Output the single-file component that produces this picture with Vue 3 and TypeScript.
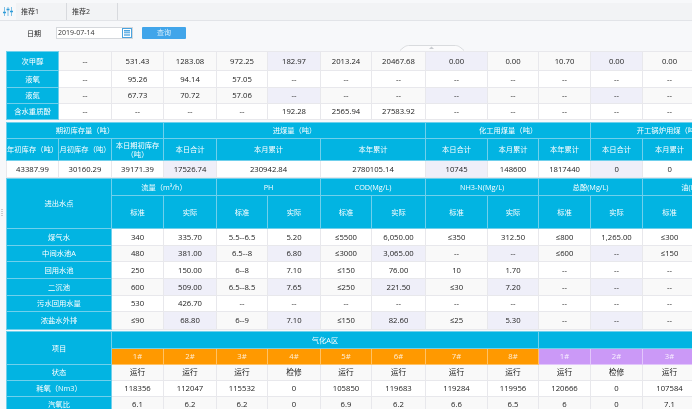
<script setup lang="ts">
type Cell = { t: string; span?: number; rows?: number; cls?: string }
type Row = { h: string; cls?: string; cells: Cell[] }

const colWidths = [52, 53, 52, 53, 51, 53, 51, 54, 62, 51, 52, 52, 54, 52, 52, 52, 52, 52, 52]

const head = (t: string, span = 1, rows = 1, cls = 'hd'): Cell => ({ t, span, rows, cls })

// columns that carry the pale lilac tint, given as index in the row
const body = (vals: string[], shaded: number[] = [], cls = ''): Cell[] =>
  vals.map((t, i) => ({ t, cls: [shaded.includes(i) ? 'tint' : '', cls].join(' ') }))

const dash = '--'

const stockRows: Row[] = [
  { h: 'h19', cls: 'stripe', cells: [head('次甲醇'), ...body([dash, '531.43', '1283.08', '972.25', '182.97', '2013.24', '20467.68', '0.00', '0.00', '10.70', '0.00', '0.00'], [4, 7, 10])] },
  { h: 'h17', cells: [head('液氧'), ...body([dash, '95.26', '94.14', '57.05', dash, dash, dash, dash, dash, dash, dash, dash])] },
  { h: 'h16', cls: 'stripe', cells: [head('液氮'), ...body([dash, '67.73', '70.72', '57.06', dash, dash, dash, dash, dash, dash, dash, dash], [4, 7, 10])] },
  { h: 'h16', cells: [head('含水重质酚'), ...body([dash, dash, dash, dash, '192.28', '2565.94', '27583.92', dash, dash, dash, dash, dash])] },
]

const coalRows: Row[] = [
  { h: 'h16', cells: [head('期初库存量（吨）', 3), head('进煤量（吨）', 5), head('化工用煤量（吨）', 3), head('开工锅炉用煤（吨）', 3)] },
  {
    h: 'h22',
    cells: [
      head('年初库存（吨）'), head('月初库存（吨）'), head('本日期初库存（吨）'),
      head('本日合计'), head('本月累计', 2), head('本年累计', 2),
      head('本日合计'), head('本月累计'), head('本年累计'),
      head('本日合计'), head('本月累计'), head('本年累计'),
    ],
  },
  {
    h: 'h17',
    cells: [
      ...body(['43387.99', '30160.29', '39171.39', '17526.74'], [3]),
      { t: '230942.84', span: 2 },
      { t: '2780105.14', span: 2 },
      ...body(['10745', '148600', '1817440', '0', '0', '0'], [0, 3]),
    ],
  },
]

const pair = () => [head('标准'), head('实际')]

const waterRows: Row[] = [
  {
    h: 'h17',
    cells: [
      head('进出水点', 2, 2), head('流量（m³/h）', 2), head('PH', 2), head('COD(Mg/L)', 2),
      head('NH3-N(Mg/L)', 2), head('总酚(Mg/L)', 2), head('油(Mg/L)', 2),
    ],
  },
  { h: 'h33', cells: [...pair(), ...pair(), ...pair(), ...pair(), ...pair(), ...pair()] },
  { h: 'h17', cells: [head('煤气水', 2), ...body(['340', '335.70', '5.5--6.5', '5.20', '≤5500', '6,050.00', '≤350', '312.50', '≤800', '1,265.00', '≤300'])] },
  { h: 'h16', cls: 'stripe', cells: [head('中间水池A', 2), ...body(['480', '381.00', '6.5--8', '6.80', '≤3000', '3,065.00', dash, dash, '≤600', dash, '≤150'], [1, 3, 5, 7, 9])] },
  { h: 'h17', cells: [head('回用水池', 2), ...body(['250', '150.00', '6--8', '7.10', '≤150', '76.00', '10', '1.70', dash, dash, dash])] },
  { h: 'h17', cls: 'stripe', cells: [head('二沉池', 2), ...body(['600', '509.00', '6.5--8.5', '7.65', '≤250', '221.50', '≤30', '7.20', dash, dash, dash], [1, 3, 5, 7, 9])] },
  { h: 'h16', cells: [head('污水回用水量', 2), ...body(['530', '426.70', dash, dash, dash, dash, dash, dash, dash, dash, dash])] },
  { h: 'h18', cls: 'stripe', cells: [head('浓盐水外排', 2), ...body(['≤90', '68.80', '6--9', '7.10', '≤150', '82.60', '≤25', '5.30', dash, dash, dash], [1, 3, 5, 7, 9])] },
]

const unitRows: Row[] = [
  { h: 'h17', cells: [head('项目', 2, 2), head('气化A区', 8), head('气化B区', 8)] },
  {
    h: 'h16',
    cells: [
      ...['1#', '2#', '3#', '4#', '5#', '6#', '7#', '8#'].map((t) => head(t, 1, 1, 'orange')),
      ...['1#', '2#', '3#'].map((t) => head(t, 1, 1, 'purple')),
    ],
  },
  { h: 'h16', cls: 'stripe', cells: [head('状态', 2), ...body(['运行', '运行', '运行', '检修', '运行', '运行', '运行', '运行', '运行', '检修', '运行'])] },
  { h: 'h16', cells: [head('耗氧（Nm3）', 2), ...body(['118356', '112047', '115532', '0', '105850', '119683', '119284', '119956', '120666', '0', '107584'])] },
  { h: 'h16', cls: 'stripe', cells: [head('汽氧比', 2), ...body(['6.1', '6.2', '6.2', '0', '6.9', '6.2', '6.6', '6.5', '6', '0', '7.1'])] },
]

const sections = [
  { name: 'sec-stock', rows: stockRows },
  { name: 'sec-coal', rows: coalRows },
  { name: 'sec-water', rows: waterRows },
  { name: 'sec-unit', rows: unitRows },
]
</script>

<template>
  <div class="page">
    <div class="tabs">
      <div class="tab-icon">
        <svg width="10" height="9" viewBox="0 0 10 9">
          <path d="M1.5 0v9M5 0v9M8.500 0v9" stroke="#7fc0e6" stroke-width="1" fill="none" />
          <path d="M0 5.500h3M3.500 2.500h3M7 4.500h3" stroke="#2f9bd8" stroke-width="1.400" fill="none" />
        </svg>
      </div>
      <div class="tab">推荐1</div>
      <div class="tab">推荐2</div>
    </div>

    <div class="filter">
      <label class="filter-label">日期</label>
      <div class="date-box">
        <span class="date-text">2019-07-14</span>
        <span class="date-btn">
          <svg width="8" height="8" viewBox="0 0 8 8">
            <rect x="0.500" y="0.500" width="7" height="7" fill="none" stroke="#fff" />
            <path d="M1 2.800h6M1 4.500h6M1 6h6" stroke="#fff" stroke-width="0.700" />
          </svg>
        </span>
      </div>
      <button class="query-btn">查询</button>
    </div>

    <div class="collapse-handle">
      <svg width="64" height="6" viewBox="0 0 64 6">
        <path d="M0 5.500C5 1 6 .5 10 .5h44c4 0 5 .5 10 5" fill="#fbfbfc" stroke="#d9dbde" />
        <path d="M29 4l2.500-2.500L34 4z" fill="#c9ccd0" />
      </svg>
    </div>
    <div class="side-handle"></div>

    <div class="tables">
      <table v-for="sec in sections" :key="sec.name" :class="sec.name">
        <colgroup>
          <col v-for="(w, i) in colWidths" :key="i" :width="w" />
        </colgroup>
        <tbody>
          <tr v-for="(row, r) in sec.rows" :key="r" :class="[row.h, row.cls]">
            <td
              v-for="(cell, c) in row.cells"
              :key="c"
              :colspan="cell.span || 1"
              :rowspan="cell.rows || 1"
              :class="cell.cls"
            >{{ cell.t }}</td>
          </tr>
        </tbody>
      </table>
    </div>
  </div>
</template>

<style>
html,
body {
  margin: 0;
  background: #f7f8fa;
}
</style>

<style scoped>
.page {
  position: relative;
  width: 692px;
  height: 409px;
  overflow: hidden;
  padding-top: 3px;
  box-sizing: border-box;
  background: #f7f8fa;
  font-family: "Open Sans", "Noto Sans CJK SC", sans-serif;
  font-size: 7.7px;
  color: #222;
  filter: blur(0.35px);
}

.tabs {
  display: flex;
  height: 18px;
  box-sizing: border-box;
  background: #f2f3f5;
  border-bottom: 1px solid #e2e4e8;
}

.tab-icon {
  width: 16px;
  background: #f7f8fa;
  display: flex;
  align-items: center;
  padding-left: 3px;
  box-sizing: border-box;
}

.tab {
  width: 51px;
  padding-left: 5px;
  box-sizing: border-box;
  border-right: 1px solid #d8dade;
  line-height: 17px;
  color: #333;
  font-size: 7px;
}

.filter {
  display: flex;
  align-items: center;
  height: 30px;
  padding-bottom: 6px;
  box-sizing: border-box;
  padding-left: 27px;
}

.filter-label {
  width: 29px;
  font-size: 7px;
  color: #222;
}

.date-box {
  display: flex;
  width: 77px;
  height: 12px;
  box-sizing: border-box;
  border: 1px solid #d5d8dc;
  background: #fff;
}

.date-text {
  flex: 1;
  padding-left: 1px;
  font-size: 7px;
  line-height: 10px;
  color: #333;
}

.date-btn {
  width: 10px;
  background: #4aa3df;
  display: flex;
  align-items: center;
  justify-content: center;
}

.query-btn {
  margin-left: 9px;
  width: 44px;
  height: 12px;
  padding: 0;
  border: none;
  border-radius: 1px;
  background: #41a5ea;
  color: #d7eefc;
  font-family: inherit;
  font-size: 7px;
  line-height: 12px;
}

.collapse-handle {
  position: absolute;
  left: 400px;
  top: 45px;
  line-height: 0;
}

.side-handle {
  position: absolute;
  left: 1px;
  top: 209px;
  width: 2px;
  height: 7px;
  background: repeating-linear-gradient(#c9ccd0 0 1px, transparent 1px 2px);
}

.tables {
  padding-left: 6px;
}

table {
  width: 1000px;
  table-layout: fixed;
  border-collapse: collapse;
  background: #fff;
}

.sec-coal {
  margin-top: 2px;
}

.sec-unit {
  margin-top: 1px;
}

td {
  padding: 0;
  box-sizing: border-box;
  border: 1px solid #e8e8ec;
  text-align: center;
  vertical-align: middle;
  line-height: 9px;
  white-space: normal;
  overflow: hidden;
}

.h16 td { height: 16px; }
.h17 td { height: 17px; }
.h18 td { height: 18px; }
.h19 td { height: 19px; }
.h22 td { height: 22px; }
.h33 td { height: 33px; }

.stripe td {
  background: #f9f9f9;
}

td.tint,
.stripe td.tint {
  background: #efeff9;
}

td.hd {
  background: #02b4e2;
  border-color: #6fd0ec;
  color: #fff;
  font-size: 7.3px;
}

td.orange {
  background: #ff9900;
  border-color: #ffc266;
  color: #ffeed6;
}

td.purple {
  background: #cb99f7;
  border-color: #e2c6fb;
  color: #f8f0ff;
}
</style>
